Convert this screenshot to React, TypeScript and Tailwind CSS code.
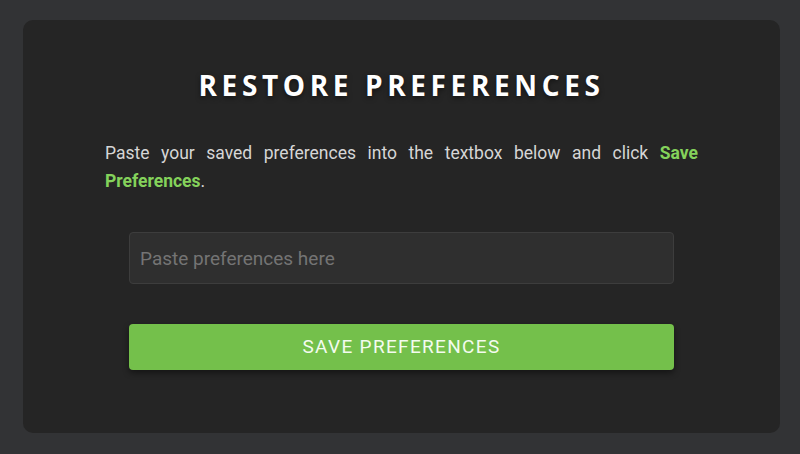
export default function App() {
  return (
    <div className="min-h-[454px] bg-[#323335] pt-[20px] pl-[23px] pr-[20px] pb-[21px]" style={{ fontFamily: 'Roboto, "Liberation Sans", sans-serif' }}>
      <div className="rounded-[10px] bg-[#252525] pl-[82px] pr-[82px] pt-[47px] pb-[63px]">
        <h1
          className="text-center text-[28px] leading-[36px] font-bold tracking-[0.165em] text-white [text-shadow:0_2px_5px_rgba(0,0,0,0.5)]"
          style={{ fontFamily: '"Open Sans", "Liberation Sans", sans-serif' }}
        >
          RESTORE PREFERENCES
        </h1>
        <p className="mt-[36px] text-justify text-[17.5px] leading-[28px] text-[#d6d6d6]">
          Paste your saved preferences into the textbox below and click{' '}
          <span className="font-bold text-[#84d25b]">Save Preferences</span>.
        </p>
        <div className="mx-[24px] mt-[37px] flex flex-col gap-[39px]">
          <input
            type="text"
            placeholder="Paste preferences here"
            className="h-[52px] w-full rounded-[4px] border border-[#3d3d3d] bg-[#2f2f2f] px-[10px] text-[19px] text-[#ddd] placeholder:text-[#747474] outline-none"
          />
          <button className="mt-px h-[46px] w-full rounded-[4px] bg-[#74c04b] text-[19px] tracking-[0.07em] text-[#f3fbef] shadow-[0_3px_6px_rgba(0,0,0,0.45)]">
            SAVE PREFERENCES
          </button>
        </div>
      </div>
    </div>
  );
}
